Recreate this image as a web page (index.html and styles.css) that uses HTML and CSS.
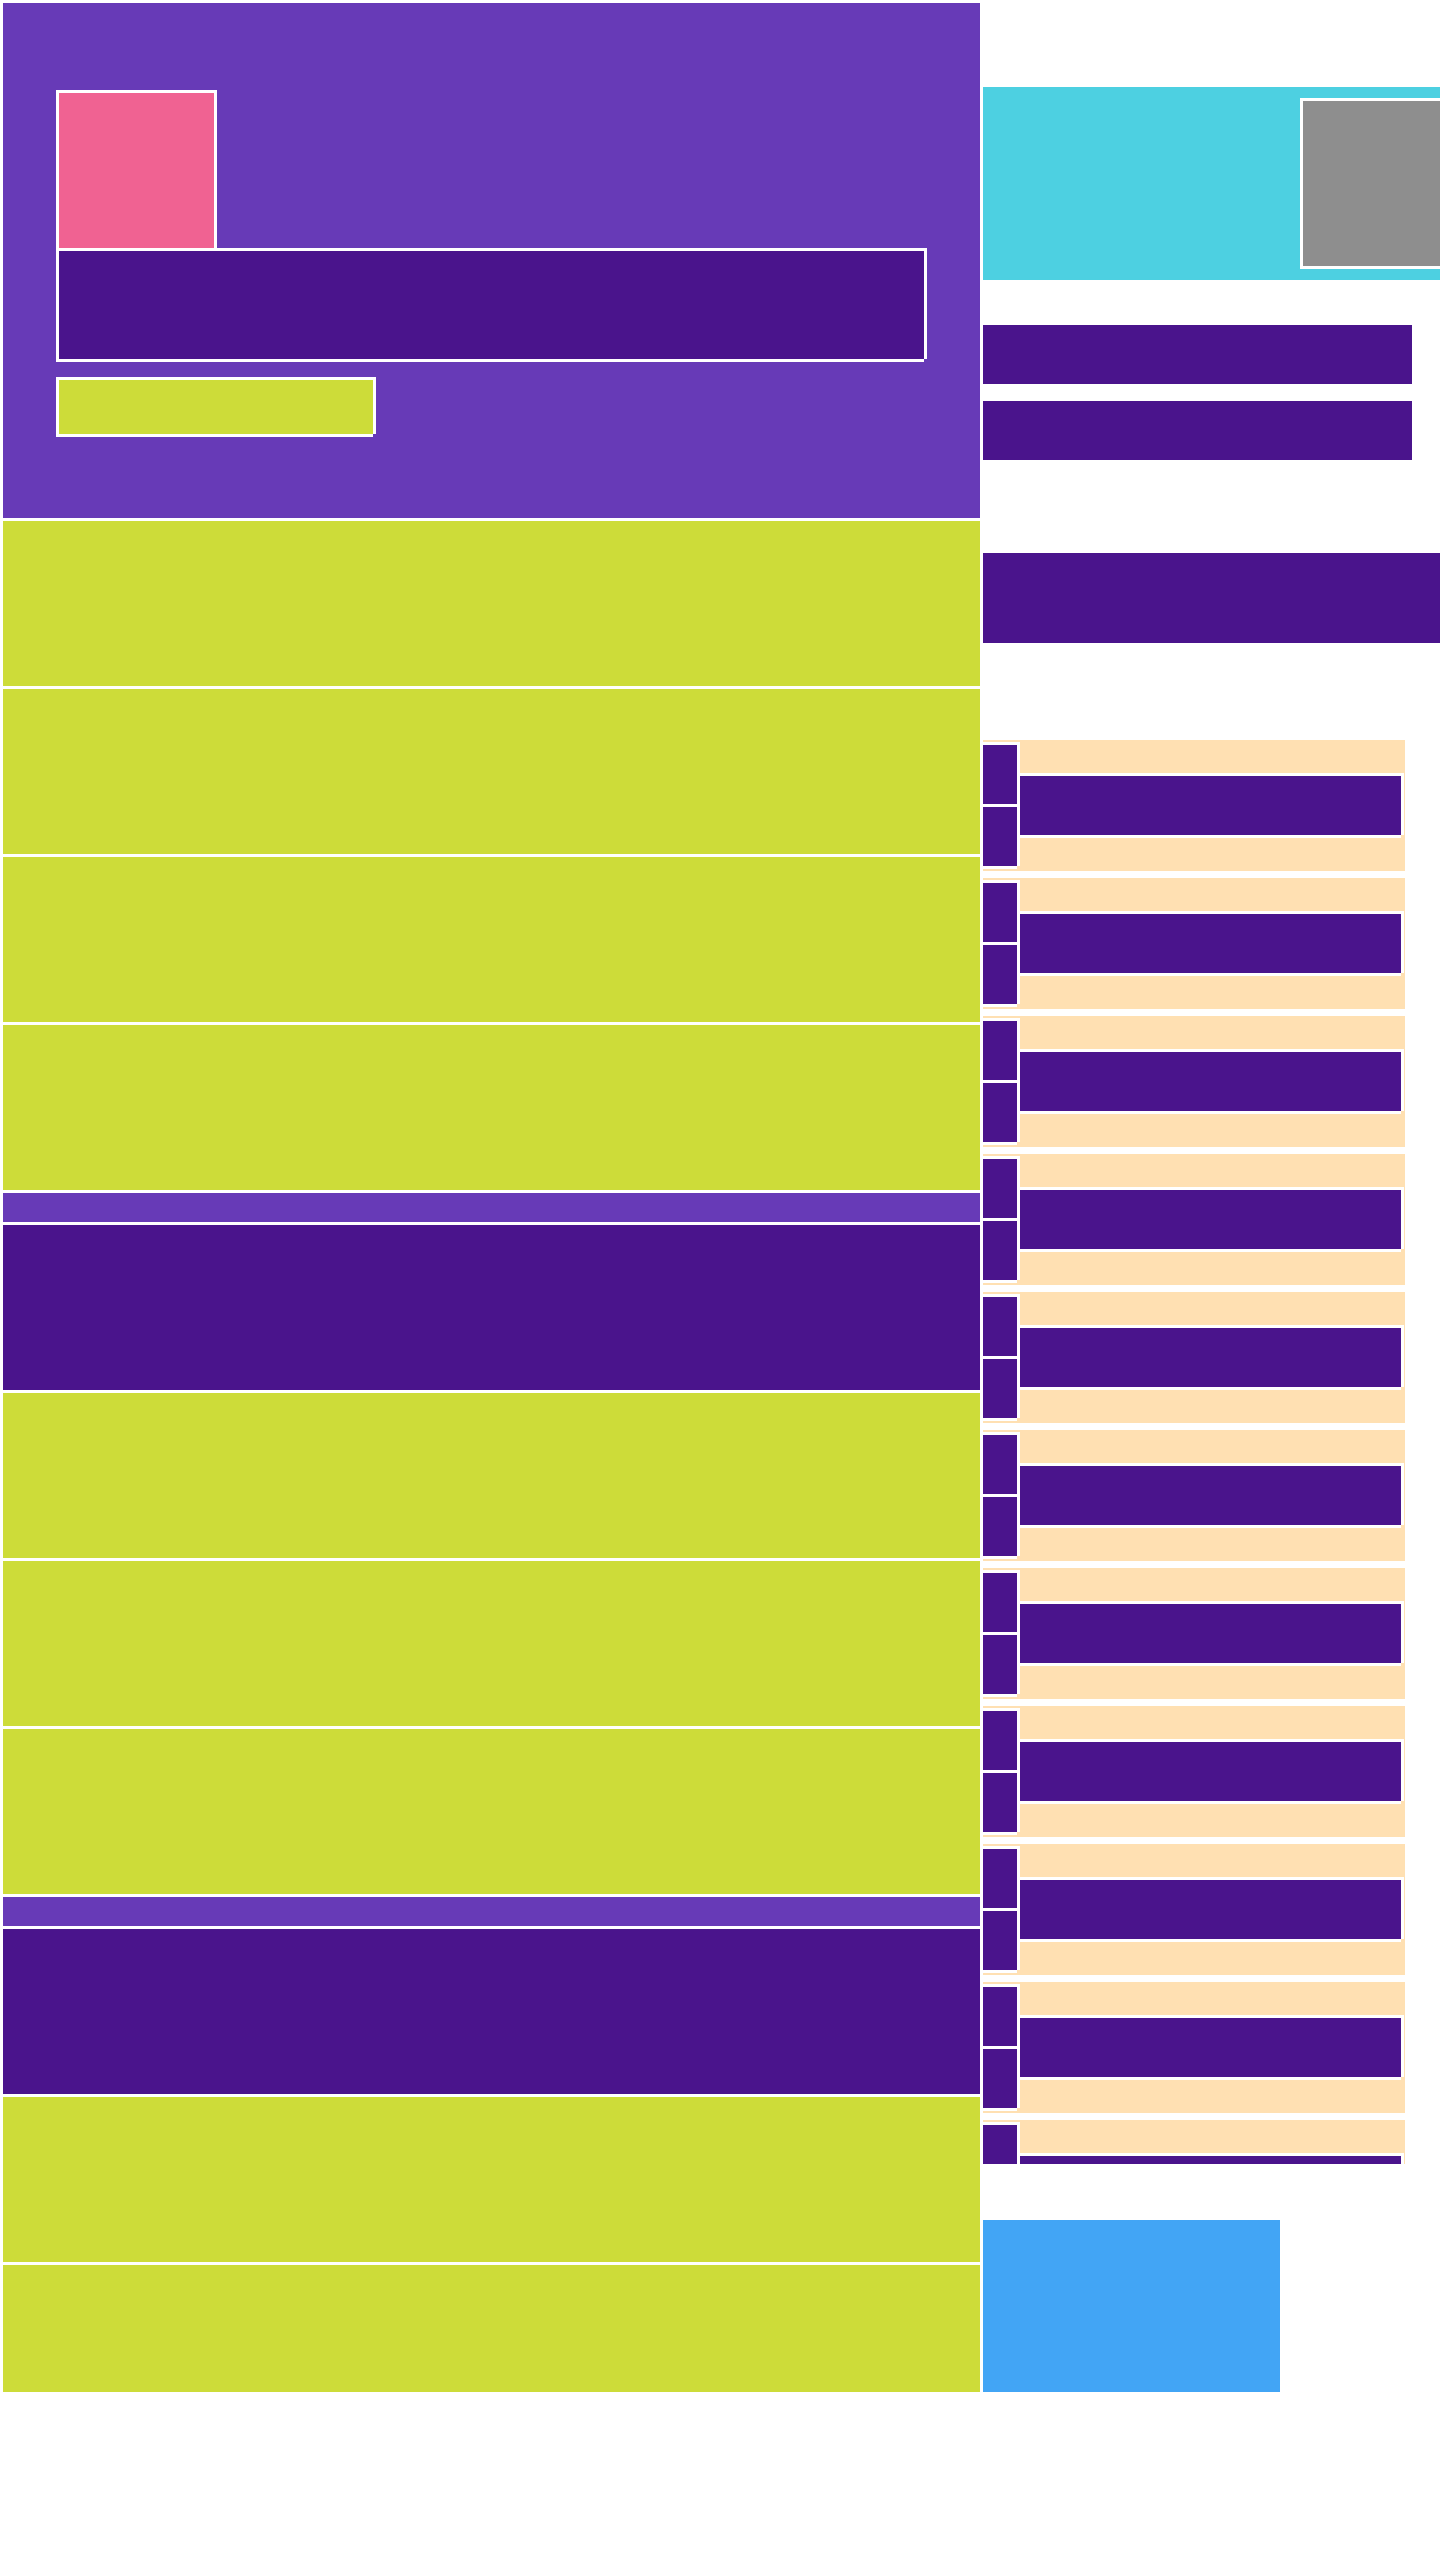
FILE: index.html
```html
<!DOCTYPE html>
<html lang="en">
<head>
    <meta charset="UTF-8">
    <meta name="viewport" content="width=device-width, initial-scale=1.0">
    <title>Layout</title>
    <link rel="stylesheet" href="styles.css">
</head>
<body>
<div class="page">
    <div class="main">
        <div class="hero">
            <div class="frame hero-pic"></div>
            <div class="frame hero-title"></div>
            <div class="frame hero-button"></div>
        </div>
        <div class="row lime"></div>
        <div class="row lime"></div>
        <div class="row lime"></div>
        <div class="row lime"></div>
        <div class="band"></div>
        <div class="row dark"></div>
        <div class="row lime"></div>
        <div class="row lime"></div>
        <div class="row lime"></div>
        <div class="band"></div>
        <div class="row dark"></div>
        <div class="row lime"></div>
        <div class="row lime short"></div>
    </div>

    <div class="side">
        <div class="banner">
            <div class="frame banner-pic"></div>
        </div>
        <div class="side-bar first"></div>
        <div class="side-bar"></div>
        <div class="side-head"></div>

        <div class="list">
            <div class="card"><div class="thumbs"><div class="thumb"></div><div class="thumb"></div></div><div class="frame card-bar"></div></div>
            <div class="card"><div class="thumbs"><div class="thumb"></div><div class="thumb"></div></div><div class="frame card-bar"></div></div>
            <div class="card"><div class="thumbs"><div class="thumb"></div><div class="thumb"></div></div><div class="frame card-bar"></div></div>
            <div class="card"><div class="thumbs"><div class="thumb"></div><div class="thumb"></div></div><div class="frame card-bar"></div></div>
            <div class="card"><div class="thumbs"><div class="thumb"></div><div class="thumb"></div></div><div class="frame card-bar"></div></div>
            <div class="card"><div class="thumbs"><div class="thumb"></div><div class="thumb"></div></div><div class="frame card-bar"></div></div>
            <div class="card"><div class="thumbs"><div class="thumb"></div><div class="thumb"></div></div><div class="frame card-bar"></div></div>
            <div class="card"><div class="thumbs"><div class="thumb"></div><div class="thumb"></div></div><div class="frame card-bar"></div></div>
            <div class="card"><div class="thumbs"><div class="thumb"></div><div class="thumb"></div></div><div class="frame card-bar"></div></div>
            <div class="card"><div class="thumbs"><div class="thumb"></div><div class="thumb"></div></div><div class="frame card-bar"></div></div>
            <div class="card"><div class="thumbs"><div class="thumb"></div><div class="thumb"></div></div><div class="frame card-bar"></div></div>
        </div>

        <div class="side-box"></div>
    </div>
</div>
</body>
</html>
```

FILE: styles.css
```css
html, body {
    margin: 0;
    background: #fff;
    overflow-x: hidden;
}
body {
    font-family: "Liberation Sans", Arial, sans-serif;
}
.page {
    display: flex;
    align-items: flex-start;
    gap: 3px;
    padding: 3px 0 0 3px;
}

/* white edge on every side, drawn like the original: corners left open */
.frame {
    box-sizing: border-box;
    border-top: 3px solid #fff;
    border-left: 3px solid #fff;
    box-shadow: 3px 0 0 #fff, 0 3px 0 #fff;
}

.main {
    width: 977px;
    flex-shrink: 0;
    display: flex;
    flex-direction: column;
    gap: 3px;
}
.hero {
    box-sizing: border-box;
    height: 515px;
    padding: 87px 0 0 53px;
    background-color: #673ab7;
}
.hero-pic {
    width: 158px;
    height: 158px;
    background-color: #f06292;
}
.hero-title {
    width: 868px;
    height: 111px;
    background-color: #4a148c;
}
.hero-button {
    width: 317px;
    height: 57px;
    margin-top: 18px;
    background-color: #cddc39;
}
.row {
    height: 165px;
}
.row.short {
    height: 127px;
}
.lime {
    background-color: #cddc39;
}
.dark {
    background-color: #4a148c;
}
.band {
    height: 29px;
    background-color: #673ab7;
}

.side {
    width: 457px;
    flex-shrink: 0;
    overflow: hidden;
    display: flex;
    flex-direction: column;
}
.banner {
    box-sizing: border-box;
    width: 520px;
    height: 193px;
    margin-top: 84px;
    padding: 11px 0 0 317px;
    background-color: #4dd0e1;
}
.banner-pic {
    width: 180px;
    height: 168px;
    background-color: #8e8e8e;
}
.side-bar {
    width: 429px;
    height: 59px;
    margin-top: 17px;
    background-color: #4a148c;
}
.side-bar.first {
    margin-top: 45px;
}
.side-head {
    width: 520px;
    height: 90px;
    margin-top: 93px;
    background-color: #4a148c;
}

.list {
    height: 1424px;
    margin-top: 97px;
    overflow: hidden;
    display: flex;
    flex-direction: column;
    gap: 7px;
}
.card {
    box-sizing: border-box;
    width: 422px;
    height: 131px;
    flex-shrink: 0;
    display: flex;
    align-items: center;
    padding: 2px 4px 5px 0;
    background-color: #ffe0b2;
}
.thumbs {
    width: 34px;
    flex-shrink: 0;
    display: flex;
    flex-direction: column;
}
.thumb {
    box-sizing: border-box;
    height: 62px;
    border-top: 3px solid #fff;
    box-shadow: 3px 0 0 #fff, 0 3px 0 #fff;
    background-color: #4a148c;
}
.card-bar {
    flex: 1;
    height: 62px;
    background-color: #4a148c;
}

.side-box {
    width: 297px;
    height: 172px;
    margin-top: 56px;
    background-color: #42a5f5;
}
```
